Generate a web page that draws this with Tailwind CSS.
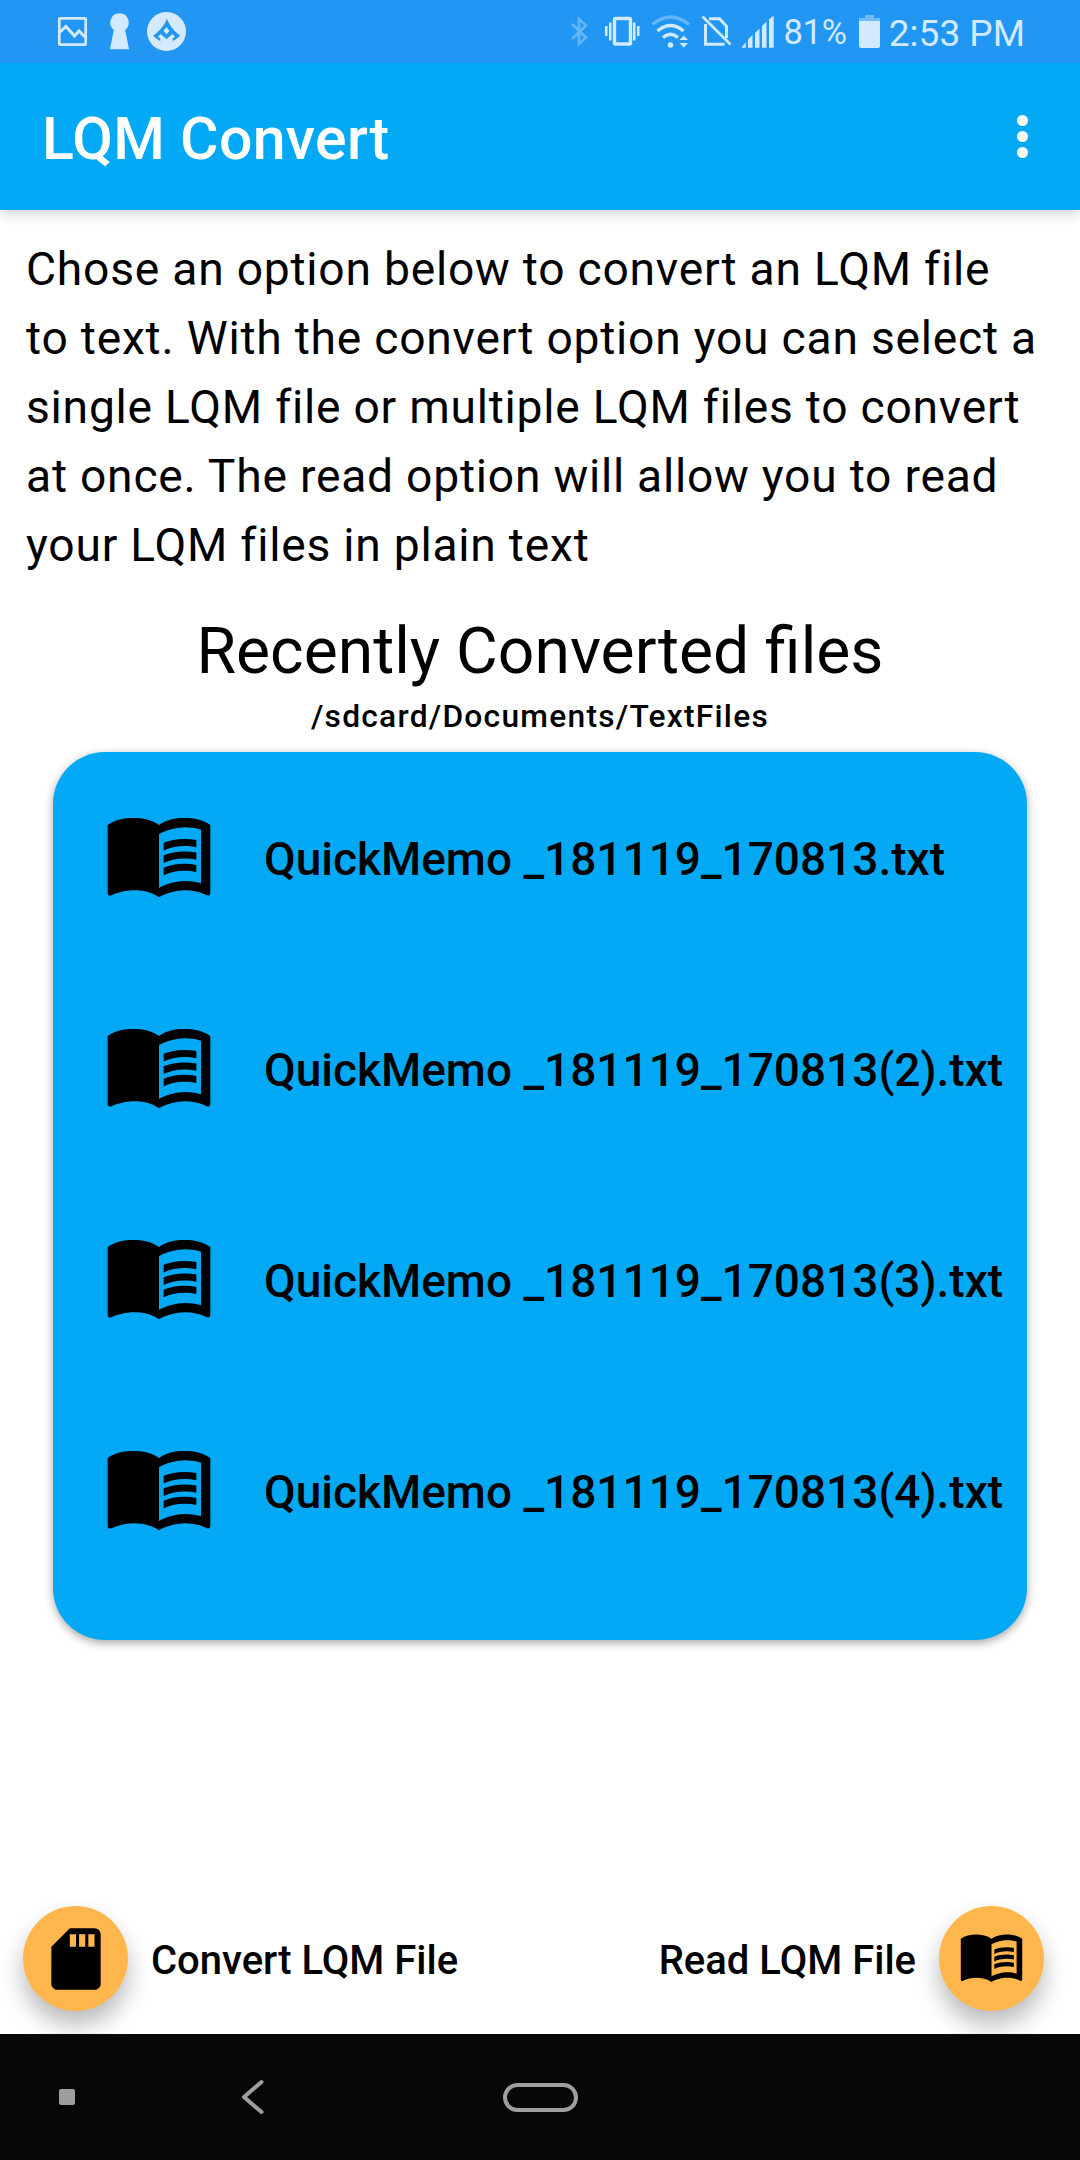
<!DOCTYPE html>
<html lang="en">

<head>
	<meta charset="utf-8">
	<title>LQM Convert</title>
	<meta name="viewport" content="width=device-width, initial-scale=1">
	<script src="https://cdn.jsdelivr.net/npm/@tailwindcss/browser@4"></script>
</head>

<body class="bg-white text-black font-['Roboto',sans-serif]">
	<svg class="hidden">
		<symbol id="book" viewBox="0 0 24 24">
			<path fill-rule="evenodd" d="M17.5 4.5c-1.95 0-4.05.4-5.5 1.5-1.45-1.1-3.55-1.5-5.5-1.5S2.45 4.9 1 6v14.65c0 .65.73.45.75.45C3.1 20.45 5.05 20 6.5 20c1.95 0 4.05.4 5.5 1.5 1.35-.85 3.8-1.5 5.5-1.5 1.65 0 3.35.3 4.75 1.05.41.21.75-.19.75-.45V6c-1.49-1.12-3.63-1.5-5.5-1.5zM21 18.5c-1.1-.35-2.3-.5-3.5-.5-1.7 0-4.15.65-5.5 1.5V8c1.35-.85 3.8-1.5 5.5-1.5 1.2 0 2.4.15 3.5.5z" />
			<path d="M17.5 10.5c.88 0 1.73.09 2.5.26V9.24C19.21 9.09 18.36 9 17.5 9c-1.7 0-3.24.29-4.5.83v1.66c1.13-.64 2.7-.99 4.5-.99zM13 12.49v1.66c1.13-.64 2.7-.99 4.5-.99.88 0 1.73.09 2.5.26V11.9c-.79-.15-1.64-.24-2.5-.24-1.7 0-3.24.3-4.5.83zM17.5 14.33c-1.7 0-3.24.29-4.5.83v1.66c1.13-.64 2.7-.99 4.5-.99.88 0 1.73.09 2.5.26v-1.52c-.79-.16-1.64-.24-2.5-.24z" />
		</symbol>
	</svg>

	<div class="flex h-[2160px] w-[1080px] flex-col overflow-hidden">
		<!-- status bar -->
		<div class="z-20 flex h-[63px] shrink-0 items-center justify-between bg-[#2196f3] pr-[55px] pl-[57px] text-[#d3e9fd]">
			<svg class="h-[63px] w-[132px]" viewBox="57 0 132 63" fill="currentColor">
				<rect x="59.3" y="18.3" width="26.4" height="26.4" rx=".8" fill="none" stroke="currentColor" stroke-width="2.7" />
				<path d="M60 32l6-5.5 8.500 9.500 4.500-5 6 6" fill="none" stroke="currentColor" stroke-width="3" />
				<path d="M119.500 13.300a9.300 9.300 0 0 1 5.700 16.600L129 49.300h-19l3.800-19.400a9.300 9.300 0 0 1 5.700-16.600z" />
				<circle cx="166.500" cy="31.500" r="19.500" />
				<path fill="#2196f3" d="M167 18.500c2 6.500 7 12.500 13.300 17.300-4 3.700-8.300 6.500-13.800 7.700-5.500-1.200-9.500-4-13.500-7.700 6.500-4.800 12-10.800 14-17.300z" />
				<path d="M166.500 27l3 3.700-3 3.700-3-3.700zM160.500 34l6 5 6-5 2.500 2.500-2.700 2.500 1.200 1.200-5 4h-4l-5-4 1.200-1.200-2.700-2.500z" />
			</svg>
			<div class="flex items-center">
				<svg class="h-[63px] w-[206px]" viewBox="570 0 206 63" fill="currentColor">
					<path opacity=".38" d="M573 24l14 13.500-7 6.500V19l7 6.500L573 39" fill="none" stroke="currentColor" stroke-width="2.700" />
					<rect x="615.500" y="18.500" width="16" height="25.500" rx="1" fill="none" stroke="currentColor" stroke-width="3.400" />
					<path d="M606 26h2.500v10H606zM610 22.500h2.500v18H610zM634 22.500h2.500v18H634zM638 26h2.500v10H638z" />
					<g fill="none" stroke="currentColor" stroke-width="3.300">
						<path opacity=".38" d="M653.500 24.500q18-15 36.500 0" />
						<path d="M658.500 31q13-11 26 0M664 37.500q7.500-6.500 15 0" />
					</g>
					<circle cx="671.500" cy="45" r="2.800" />
					<path d="M680.500 40l4.300-4.500 4.200 4.500zM680.500 43l4.300 4.500 4.200-4.500z" />
					<path d="M706.500 24v20.300h19M710 18.800h10.500l7 7.500v11.700" fill="none" stroke="currentColor" stroke-width="3" />
					<path d="M703.500 16.500l28 28" stroke="currentColor" stroke-width="2.700" />
					<path d="M742.500 47.700h4.300v-5.500zM749 39.500v8.200h4.500V35zM756 33v14.700h4.500V28.500zM763 26v21.700h4.500V21.500zM770 19.500v28.200h4.700V15.500z" />
				</svg>
				<span class="ml-2 pt-px text-[34.5px] leading-none tracking-[-0.2px]">81%</span>
				<svg class="ml-3 h-[63px] w-[21px]" viewBox="859 0 21 63" fill="currentColor">
					<path opacity=".45" d="M865 15h9v3h6v3h-21v-3h6z" />
					<path d="M859 21h21v25a2 2 0 0 1-2 2h-17a2 2 0 0 1-2-2z" />
				</svg>
				<span class="ml-[9px] pt-[3px] text-[37px] leading-none">2:53 PM</span>
			</div>
		</div>

		<!-- app bar -->
		<header class="z-10 flex h-[147px] shrink-0 items-center justify-between bg-[#03a9f4] pr-[52px] pl-[42px] text-white shadow-[0_3px_12px_rgba(0,0,0,0.2)]">
			<h1 class="pt-[5px] text-[59px] font-medium tracking-[0.3px]">LQM Convert</h1>
			<svg class="h-[43px] w-[11px]" viewBox="0 0 11 43" fill="currentColor">
				<circle cx="5.500" cy="5.500" r="5.500" />
				<circle cx="5.500" cy="21.500" r="5.500" />
				<circle cx="5.500" cy="37.500" r="5.500" />
			</svg>
		</header>

		<main class="flex h-[1824px] shrink-0 flex-col">
			<p class="mt-[25px] px-[26px] text-[46.2px] leading-[69px] tracking-[0.77px] whitespace-nowrap">Chose an option below to convert an LQM file<br>to text. With the convert option you can select a<br>single LQM file or multiple LQM files to convert<br>at once. The read option will allow you to read<br>your LQM files in plain text</p>

			<h2 class="mt-[31px] text-center text-[64.2px] leading-[80px]">Recently Converted files</h2>
			<p class="mt-[3px] text-center text-[31.76px] leading-[46px] font-medium tracking-[1.24px]">/sdcard/Documents/TextFiles</p>

			<ul class="mx-[53px] mt-3 h-[888px] shrink-0 rounded-[52px] bg-[#03a9f4] text-[46px] font-medium whitespace-nowrap shadow-[0_3px_10px_rgba(0,0,0,0.35)]">
				<li class="flex h-[211px] items-center gap-[49px] pl-[50px]">
					<svg class="mb-[10px] size-[112px] shrink-0"><use href="#book" /></svg>
					<span class="pt-[3px]">QuickMemo _181119_170813.txt</span>
				</li>
				<li class="flex h-[211px] items-center gap-[49px] pl-[50px]">
					<svg class="mb-[10px] size-[112px] shrink-0"><use href="#book" /></svg>
					<span class="pt-[3px]">QuickMemo _181119_170813(2).txt</span>
				</li>
				<li class="flex h-[211px] items-center gap-[49px] pl-[50px]">
					<svg class="mb-[10px] size-[112px] shrink-0"><use href="#book" /></svg>
					<span class="pt-[3px]">QuickMemo _181119_170813(3).txt</span>
				</li>
				<li class="flex h-[211px] items-center gap-[49px] pl-[50px]">
					<svg class="mb-[10px] size-[112px] shrink-0"><use href="#book" /></svg>
					<span class="pt-[3px]">QuickMemo _181119_170813(4).txt</span>
				</li>
			</ul>

			<div class="mt-auto mb-[23px] flex items-center justify-between pr-[36px] pl-[23px] text-[40px] font-medium">
				<div class="flex items-center gap-[23px]">
					<button class="flex size-[105px] items-center justify-center rounded-full bg-[#ffb74d] shadow-[0_14px_24px_rgba(0,0,0,0.28)]">
						<svg class="size-[74px]" viewBox="0 0 24 24">
							<path d="M18 2h-8L4.020 8 4 20c0 1.100.9 2 2 2h12c1.100 0 2-.9 2-2V4c0-1.100-.9-2-2-2zm-6 6h-2V4h2v4zm3 0h-2V4h2v4zm3 0h-2V4h2v4z" />
						</svg>
					</button>
					<span class="pt-1">Convert LQM File</span>
				</div>
				<div class="flex items-center gap-[23px]">
					<span class="pt-1">Read LQM File</span>
					<button class="flex size-[105px] items-center justify-center rounded-full bg-[#ffb74d] shadow-[0_14px_24px_rgba(0,0,0,0.28)]">
						<svg class="mb-[6px] size-[67px]"><use href="#book" /></svg>
					</button>
				</div>
			</div>
		</main>

		<!-- navigation bar -->
		<nav class="z-10 flex h-[126px] shrink-0 items-center bg-[#070707] pl-[59px]">
			<span class="size-4 rounded-[2px] bg-[#9e9e9e]"></span>
			<svg class="ml-[165px] h-[36px] w-[26px]" viewBox="0 0 26 36" fill="none" stroke="#9e9e9e" stroke-width="4" stroke-linecap="round" stroke-linejoin="round">
				<path d="M21.500 3L4 18l17.500 15" />
			</svg>
			<span class="ml-[237px] h-[29px] w-[75px] rounded-full border-4 border-[#9e9e9e]"></span>
		</nav>
	</div>
</body>

</html>
